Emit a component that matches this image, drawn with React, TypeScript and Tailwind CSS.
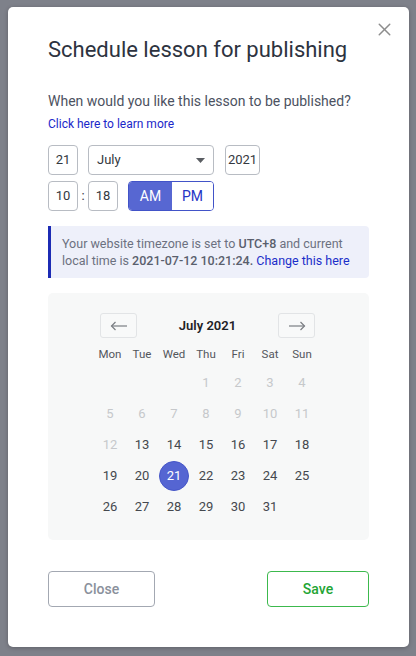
import { X } from "lucide-react";

const font = { fontFamily: "Roboto, 'Noto Sans', Arial, sans-serif" };

const weekdays = ["Mon", "Tue", "Wed", "Thu", "Fri", "Sat", "Sun"];

// July 2021 starts on a Thursday
const cells: (number | null)[] = [null, null, null, ...Array.from({ length: 31 }, (_, i) => i + 1)];
const weeks: (number | null)[][] = [];
for (let i = 0; i < cells.length; i += 7) weeks.push(cells.slice(i, i + 7));

const SmallBox = ({ value, width }: { value: string; width: string }) => (
  <div
    className={`${width} h-[30px] flex items-center justify-center rounded-[4px] border border-[#b8bcc3] bg-white text-[13px] text-[#333840]`}
  >
    {value}
  </div>
);

const DayCell = ({ day }: { day: number | null }) => {
  if (day === null) return <div className="w-[32px] h-[31px]" />;
  const disabled = day < 13;
  const selected = day === 21;
  return (
    <div className="w-[32px] h-[31px] flex items-center justify-center">
      {selected ? (
        <div className="w-[30px] h-[30px] rounded-full bg-[#5565d2] border border-[#4656c8] text-white flex items-center justify-center text-[13px]">
          {day}
        </div>
      ) : (
        <span className={`text-[13px] ${disabled ? "text-[#c6c8cb]" : "text-[#45484e]"}`}>{day}</span>
      )}
    </div>
  );
};

const ArrowButton = ({ dir }: { dir: "left" | "right" }) => (
  <button className="w-[37px] h-[25px] flex items-center justify-center rounded-[3px] border border-[#e2e4e6] bg-[#f8f9f9]">
    <svg width="18" height="10" viewBox="0 0 18 10" fill="none" stroke="#7a7d82" strokeWidth="1.2">
      {dir === "left" ? (
        <>
          <path d="M1.5 5H17" />
          <path d="M5.5 1L1.5 5L5.5 9" />
        </>
      ) : (
        <>
          <path d="M1 5H16.5" />
          <path d="M12.5 1L16.5 5L12.5 9" />
        </>
      )}
    </svg>
  </button>
);

export default function App() {
  return (
    <div className="w-[416px] h-[656px] bg-[#7e818a] pt-[7px] pl-[8px]" style={font}>
      <div className="relative w-[401px] h-[640px] bg-white rounded-[5px] shadow-[0_1px_4px_rgba(0,0,0,0.25)] pt-[29px] px-[40px]">
        <button className="absolute right-[14px] top-[12px] text-[#8d8d8d]">
          <X size={21} strokeWidth={1.7} />
        </button>

        <h2 className="text-[22px] leading-[28px] text-[#2d3340]">Schedule lesson for publishing</h2>

        <p className="mt-[27px] text-[14px] leading-[20px] text-[#4c5261]">
          When would you like this lesson to be published?
        </p>
        <a className="block mt-[4px] text-[12px] leading-[18px] text-[#1b27c9]">Click here to learn more</a>

        <div className="mt-[12px] flex items-center">
          <SmallBox value="21" width="w-[30px]" />
          <div className="ml-[10px] w-[126px] h-[30px] flex items-center justify-between rounded-[4px] border border-[#b8bcc3] bg-white pl-[8px] pr-[8px] text-[13px] text-[#333840]">
            <span>July</span>
            <svg width="9" height="5" viewBox="0 0 9 5">
              <path d="M0 0H9L4.5 5Z" fill="#5a5d62" />
            </svg>
          </div>
          <div className="ml-[11px]">
            <SmallBox value="2021" width="w-[35px]" />
          </div>
        </div>

        <div className="mt-[6px] flex items-center">
          <SmallBox value="10" width="w-[30px]" />
          <span className="w-[10px] text-center text-[13px] text-[#333840]">:</span>
          <SmallBox value="18" width="w-[30px]" />
          <div className="ml-[10px] flex h-[30px] rounded-[4px] border border-[#4253c8] overflow-hidden text-[14px]">
            <div className="w-[43px] flex items-center justify-center bg-[#5767d2] text-white">AM</div>
            <div className="w-[41px] flex items-center justify-center bg-white text-[#2434c4]">PM</div>
          </div>
        </div>

        <div className="mt-[15px] h-[52px] rounded-r-[4px] bg-[#eef0fa] border-l-[3px] border-[#1c2bb4] pl-[11px] pr-[4px] pt-[9px] text-[12.5px] leading-[17px] text-[#6c7180]">
          <p>
            Your website timezone is set to <span className="font-medium text-[#5a5f6d]">UTC+8</span> and current
            <br />
            local time is <span className="font-medium text-[#5a5f6d]">2021-07-12 10:21:24.</span>{" "}
            <span className="text-[#1b2ec9]">Change this here</span>
          </p>
        </div>

        <div className="mt-[15px] h-[247px] rounded-[5px] bg-[#f7f8f8] pt-[20px] pl-[46px]">
          <div className="w-[224px]">
            <div className="flex items-center justify-between pl-[6px] pr-[3px]">
              <ArrowButton dir="left" />
              <span className="text-[13px] font-semibold text-[#1f2226]">July 2021</span>
              <ArrowButton dir="right" />
            </div>
            <div className="mt-[5px] grid grid-cols-7 h-[24px] items-center">
              {weekdays.map((d) => (
                <span key={d} className="text-center text-[11.5px] text-[#53565c]">
                  {d}
                </span>
              ))}
            </div>
            {weeks.map((w, i) => (
              <div key={i} className="grid grid-cols-7">
                {w.map((d, j) => (
                  <DayCell key={j} day={d} />
                ))}
              </div>
            ))}
          </div>
        </div>

        <div className="mt-[31px] flex justify-between">
          <button className="w-[107px] h-[36px] rounded-[4px] border border-[#a3a8b2] text-[14px] font-medium text-[#8a909b]">
            Close
          </button>
          <button className="w-[102px] h-[36px] rounded-[4px] border border-[#3cb94d] text-[14px] font-medium text-[#23a534]">
            Save
          </button>
        </div>
      </div>
    </div>
  );
}
